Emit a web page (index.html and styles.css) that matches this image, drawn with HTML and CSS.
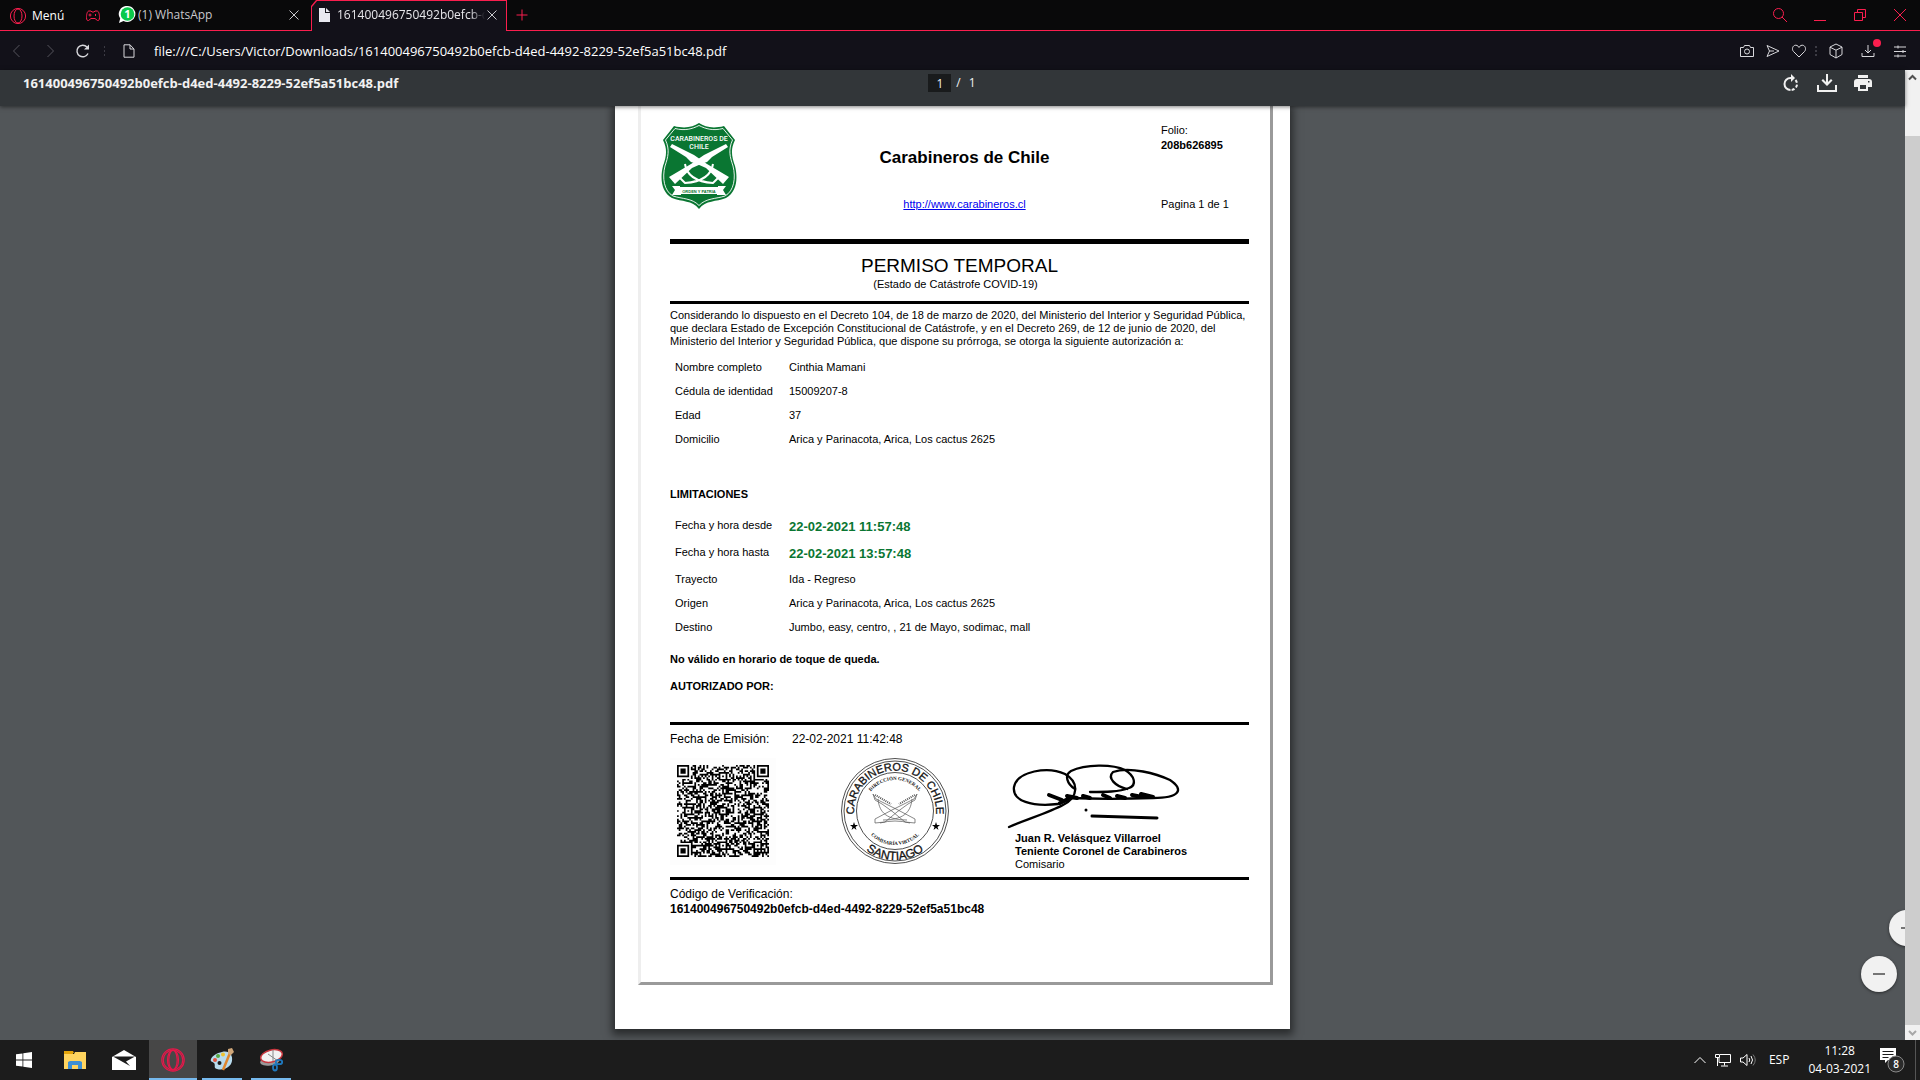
FILE: index.html
```html
<!DOCTYPE html>
<html lang="es">
<head>
<meta charset="utf-8">
<title>161400496750492b0efcb-d4ed-4492-8229-52ef5a51bc48.pdf</title>
<link rel="stylesheet" href="styles.css">
</head>
<body>
<header class="tabbar">
  <button class="menu" type="button">
    <svg width="18" height="18" viewBox="0 0 18 18"><circle cx="9" cy="9" r="7.6"/><ellipse cx="9" cy="9" rx="4" ry="7"/></svg>
    Menú
  </button>
  <button class="gx" type="button" aria-label="GX">
    <svg width="16" height="12" viewBox="0 0 16 12"><path d="M4 1h2l1 1h2l1-1h2c2 0 2.500 4 2.500 6.500S13.500 11 12.500 10.500L10 8.500H6L3.500 10.500C2.500 11 1.500 10 1.500 7.500S2 1 4 1z"/><path d="M5 3.500v3M3.500 5h3M10.500 4v2"/></svg>
  </button>
  <div class="tab">
    <svg width="18" height="18" viewBox="0 0 18 18"><path fill="#fff" d="M9.500 0a8 8 0 1 1-4 15L1 17l1.200-4.500A8 8 0 0 1 9.500 0z"/><circle cx="9.500" cy="8" r="6.800" fill="#0ac94b"/><text x="9.500" y="12" fill="#fff" font-size="11" font-weight="700" text-anchor="middle">1</text></svg>
    <span class="tab-title">(1) WhatsApp</span>
    <button class="close" type="button" aria-label="Cerrar"><svg width="12" height="12" viewBox="0 0 12 12"><path d="M1.500 1.500l9 9M10.500 1.500l-9 9"/></svg></button>
  </div>
  <div class="tab active">
    <svg width="11" height="14" viewBox="0 0 11 14"><path fill="#e8e8ef" d="M0 0h6v5h5v9H0zM7 0l4 4H7z"/></svg>
    <span class="tab-title fade">161400496750492b0efcb-d4ed</span>
    <button class="close" type="button" aria-label="Cerrar"><svg width="12" height="12" viewBox="0 0 12 12"><path d="M1.500 1.500l9 9M10.500 1.500l-9 9"/></svg></button>
  </div>
  <button class="newtab" type="button" aria-label="Nueva pestaña"><svg width="12" height="12" viewBox="0 0 12 12"><path d="M6 .5v11M.5 6h11"/></svg></button>
  <div class="window">
    <button type="button" aria-label="Buscar"><svg width="16" height="16" viewBox="0 0 16 16"><circle cx="6.500" cy="6.500" r="5"/><path d="M10 10l5 5"/></svg></button>
    <button type="button" aria-label="Minimizar"><svg width="14" height="14" viewBox="0 0 14 14"><path d="M1 12.500h12"/></svg></button>
    <button type="button" aria-label="Restaurar"><svg width="14" height="14" viewBox="0 0 14 14"><path d="M1.500 4.500h8v8h-8zM4.500 4.500v-3h8v8h-3"/></svg></button>
    <button type="button" aria-label="Cerrar ventana"><svg width="14" height="14" viewBox="0 0 14 14"><path d="M1 1l12 12M13 1L1 13"/></svg></button>
  </div>
</header>

<nav class="addressbar">
  <button class="nav dim" type="button" aria-label="Atrás"><svg width="10" height="14" viewBox="0 0 10 14"><path d="M7.500 1l-6 6 6 6"/></svg></button>
  <button class="nav dim" type="button" aria-label="Adelante"><svg width="10" height="14" viewBox="0 0 10 14"><path d="M2.500 1l6 6-6 6"/></svg></button>
  <button class="nav" type="button" aria-label="Recargar"><svg width="16" height="16" viewBox="0 0 16 16"><path stroke-width="1.400" d="M13 10.500A5.800 5.800 0 1 1 12 4"/><path fill="#d8d8dc" stroke="none" d="M14 1.500v5H9z"/></svg></button>
  <span class="dots"></span>
  <svg class="file" width="12" height="14" viewBox="0 0 12 14"><path d="M1 .8h6L11 5v8.200H1zM7 .8V5h4"/></svg>
  <input class="url" type="text" aria-label="Dirección" value="file:///C:/Users/Victor/Downloads/161400496750492b0efcb-d4ed-4492-8229-52ef5a51bc48.pdf">
  <button class="tool" type="button" aria-label="Instantánea"><svg width="16" height="14" viewBox="0 0 16 14"><path d="M1.500 3.500h3l1-2h5l1 2h3v9h-13z"/><circle cx="8" cy="7.500" r="2.500"/></svg></button>
  <button class="tool" type="button" aria-label="Enviar"><svg width="16" height="14" viewBox="0 0 16 14"><path d="M2 1.500L14 7 2 12.500 4.500 7zM4.500 7H9"/></svg></button>
  <button class="tool" type="button" aria-label="Favoritos"><svg width="16" height="14" viewBox="0 0 16 14"><path d="M8 13L2.500 7.500C.5 5.500 1.500 1.200 4.800 1.200 6.500 1.200 8 3 8 3.500 8 3 9.500 1.200 11.200 1.200c3.300 0 4.300 4.300 2.300 6.300z"/></svg></button>
  <span class="dots small"></span>
  <button class="tool wide" type="button" aria-label="Extensiones"><svg width="16" height="16" viewBox="0 0 16 16"><path d="M8 1l6 3v7.500L8 15l-6-3.500V4zM2 4.200l6 3 6-3M8 7.200V15"/></svg></button>
  <button class="tool wide badge" type="button" aria-label="Descargas"><svg width="14" height="14" viewBox="0 0 14 14"><path d="M7 1v8M4 6l3 3 3-3M1 9v3.500h12V9"/></svg></button>
  <button class="tool wide" type="button" aria-label="Configuración"><svg width="14" height="14" viewBox="0 0 14 14"><path d="M1 3h12M1 7.500h12M1 12h12M5 1.500v3M10 6v3M5 10.500v3"/></svg></button>
</nav>

<main class="viewer">
  <div class="pdf">
    <div class="pdfbar">
      <span class="pdf-title">161400496750492b0efcb-d4ed-4492-8229-52ef5a51bc48.pdf</span>
      <div class="pager"><input type="text" aria-label="Página" value="1"><span>/</span><span>1</span></div>
      <div class="pdf-tools">
        <button type="button" aria-label="Girar"><svg width="16" height="18" viewBox="0 0 16 18"><path class="ring" d="M7.500 16A6 6 0 0 1 7.500 4H9"/><path class="ring" stroke-dasharray="3 2" d="M12.500 6A6 6 0 0 1 8 16"/><path d="M8 0l4 4-4 4z"/></svg></button>
        <button type="button" aria-label="Descargar"><svg width="20" height="18" viewBox="0 0 20 18"><path d="M9 0h2v8l3-3 1.500 1.500L10 12 4.500 6.500 6 5l3 3zM0 11h2v5h16v-5h2v7H0z"/></svg></button>
        <button type="button" aria-label="Imprimir"><svg width="18" height="16" viewBox="0 0 18 16"><path fill-rule="evenodd" d="M4 0h10v3H4zM3 4h12a3 3 0 0 1 3 3v5h-4v4H4v-4H0V7a3 3 0 0 1 3-3zm3 6v4h6v-4zM14 6v1.500h1.500V6z"/></svg></button>
      </div>
    </div>

    <div class="canvas">
      <article class="sheet">
        <div class="frame">
          <header class="doc-head">
            <svg width="76" height="86" viewBox="0 0 76 86" role="img" aria-label="Escudo de Carabineros">
              <path fill="#0a7632" d="M38 0C44 4 52 6 63 3L74 17C69 27 71 34 74 43 77 55 76 69 65 75 55 79 45 77 38 86 31 77 21 79 11 75 0 69-1 55 2 43 5 34 7 27 2 17L13 3C24 6 32 4 38 0z"/>
              <path fill="none" stroke="#fff" stroke-width=".9" d="M38 2.500C45 6 52 8 62 5.500L71.500 17C67 27 69 34 72 43 75 55 73 68 64 73 55 76 45 75 38 82.500 31 75 21 76 12 73 3 68 1 55 4 43 7 34 9 27 4.500 17L14 5.500C24 8 31 6 38 2.500z"/>
              <g fill="#fff" font-family="Roboto" font-size="7" font-weight="500" text-anchor="middle"><text x="38" y="18">CARABINEROS DE</text><text x="38" y="26">CHILE</text></g>
              <g fill="#fff"><path d="M9 24l2-3 22 11 13 9 22 13-6 7-17-16-9-4-6-2-5-5z"/><path d="M67 24l-2-3-22 11-13 9L8 54l6 7 17-16 9-4 6-2 5-5z"/></g>
              <path fill="none" stroke="#fff" stroke-width="2" d="M24 41c2 14 14 18 28 19l5-5M52 41c-2 14-14 18-28 19l-5-5"/>
              <path fill="#fff" d="M11 63h8v1h38v-1h8l-3 4 3 5h-9v-1H20v1h-9l3-5z"/>
              <text x="38" y="70" fill="#0a7632" font-size="4" font-weight="700" text-anchor="middle">ORDEN Y PATRIA</text>
            </svg>
            <div class="doc-brand"><h1>Carabineros de Chile</h1><a href="http://www.carabineros.cl">http://www.carabineros.cl</a></div>
            <div class="doc-folio"><span>Folio:</span><strong>208b626895</strong><span class="pages">Pagina 1 de 1</span></div>
          </header>
          <div class="doc-body">
            <hr class="thick">
            <div class="doc-title"><h2>PERMISO TEMPORAL</h2><p>(Estado de Catástrofe COVID-19)</p></div>
            <hr>
            <p class="intro">Considerando lo dispuesto en el Decreto 104, de 18 de marzo de 2020, del Ministerio del Interior y Seguridad Pública,<br>que declara Estado de Excepción Constitucional de Catástrofe, y en el Decreto 269, de 12 de junio de 2020, del<br>Ministerio del Interior y Seguridad Pública, que dispone su prórroga, se otorga la siguiente autorización a:</p>
            <table class="data">
              <tr><th scope="row">Nombre completo</th><td>Cinthia Mamani</td></tr>
              <tr><th scope="row">Cédula de identidad</th><td>15009207-8</td></tr>
              <tr><th scope="row">Edad</th><td>37</td></tr>
              <tr><th scope="row">Domicilio</th><td>Arica y Parinacota, Arica, Los cactus 2625</td></tr>
            </table>
            <h3>LIMITACIONES</h3>
            <table class="data">
              <tr class="when"><th scope="row">Fecha y hora desde</th><td>22-02-2021 11:57:48</td></tr>
              <tr class="when"><th scope="row">Fecha y hora hasta</th><td>22-02-2021 13:57:48</td></tr>
              <tr><th scope="row">Trayecto</th><td>Ida - Regreso</td></tr>
              <tr><th scope="row">Origen</th><td>Arica y Parinacota, Arica, Los cactus 2625</td></tr>
              <tr><th scope="row">Destino</th><td>Jumbo, easy, centro, , 21 de Mayo, sodimac, mall</td></tr>
            </table>
            <p class="note">No válido en horario de toque de queda.</p>
            <p class="note">AUTORIZADO POR:</p>
            <hr class="sign-rule">
            <div class="issued"><span>Fecha de Emisión:</span><span>22-02-2021 11:42:48</span></div>
            <div class="seals">
              <svg width="106" height="107" viewBox="0 0 106 107" role="img" aria-label="Código QR"><rect width="106" height="107" fill="#fdfdfd"/><path id="qr" transform="translate(7 7) scale(1.736)"/></svg>
              <svg width="108" height="106" viewBox="-54 -53 108 106" role="img" aria-label="Timbre">
                <defs><path id="arcTop" d="M-38 16A41 41 0 1 1 38 16"/><path id="arcBottom" d="M-49 0A49 49 0 0 0 49 0"/><path id="arcIn" d="M-31 0A31 31 0 0 1 31 0"/><path id="arcInB" d="M-34 0A34 34 0 0 0 34 0"/></defs>
                <g fill="none" stroke="#222" stroke-width=".8"><ellipse rx="53.500" ry="52.500"/><ellipse rx="51" ry="50"/><circle r="38.500"/></g>
                <g text-anchor="middle" font-family="Liberation Sans" fill="#111"><text font-size="11" stroke="#111" stroke-width=".3"><textPath href="#arcTop" startOffset="50%">CARABINEROS DE CHILE</textPath></text><text font-size="12" stroke="#111" stroke-width=".3"><textPath href="#arcBottom" startOffset="50%">SANTIAGO</textPath></text></g>
                <g text-anchor="middle" font-family="Liberation Serif" font-weight="700" font-size="5" fill="#111"><text><textPath href="#arcIn" startOffset="50%">DIRECCIÓN GENERAL</textPath></text><text><textPath href="#arcInB" startOffset="50%">COMISARÍA VIRTUAL</textPath></text></g>
                <path d="M-41 11l1 3h3l-2.500 2 1 3-2.500-2-2.500 2 1-3-2.500-2h3zM41 11l1 3h3l-2.500 2 1 3-2.500-2-2.500 2 1-3-2.500-2h3z"/>
                <g fill="none" stroke="#555" stroke-width=".7"><path d="M-22-17l3 5L3-1 20 8v4L10 11-2 1-13-7l-7-4zM22-17l-3 5L-3-1-20 8v4L-10 11 2 1 13-7l7-4z"/><path d="M-17-12C-16-2-12 9 12 9M17-12C16-2 12 9-12 9M-15 12Q0 8 15 12"/><path stroke-dasharray="1 1" stroke-width="2" d="M-20-16L-4-7M20-16L4-7"/></g>
              </svg>
              <div class="signature">
                <svg width="180" height="74" viewBox="0 0 180 74" role="img" aria-label="Firma">
                  <g fill="none" stroke="#000" stroke-linecap="round" stroke-linejoin="round" stroke-width="2.300">
                    <path d="M4 69C20 62 45 54 58 47 74 39 74 24 60 16 43 8 12 13 9 29 7 43 27 49 53 46L62 42"/>
                    <path d="M70 31C62 26 59 17 66 13 80 6 108 6 120 12 130 18 132 27 124 30 114 34 100 34 85 34"/>
                    <path d="M122 31C110 28 102 20 108 14 125 8 152 16 165 22 180 32 174 40 148 40 120 41 90 41 64 40"/>
                    <path stroke-width="4" d="M44 37L57 42M62 38l10 2M78 38l7 2M98 37l7 3M112 38l8 2M127 37l10 2M136 36l12 3M55 45l8-4"/>
                    <path stroke-width="3" d="M87 58l65 2M81 52h0"/>
                  </g>
                </svg>
                <p><strong>Juan R. Velásquez Villarroel</strong><br><strong>Teniente Coronel de Carabineros</strong><br>Comisario</p>
              </div>
            </div>
            <hr>
            <p class="code">Código de Verificación:<br><strong>161400496750492b0efcb-d4ed-4492-8229-52ef5a51bc48</strong></p>
          </div>
        </div>
      </article>
      <button class="zoom plus" type="button" aria-label="Acercar"></button>
      <button class="zoom minus" type="button" aria-label="Alejar"></button>
    </div>
  </div>
  <div class="scrollbar">
    <svg width="15" height="15" viewBox="0 0 15 15"><path d="M4 9.500L7.500 6 11 9.500" stroke="#505050"/></svg>
    <div class="thumb"></div>
    <svg width="15" height="15" viewBox="0 0 15 15"><path d="M4 6l3.500 3.500L11 6" stroke="#a8a8a8"/></svg>
  </div>
</main>

<footer class="taskbar">
  <button class="start" type="button" aria-label="Inicio"><svg width="16" height="16" viewBox="0 0 16 16"><path fill="#fff" d="M0 2.300L6.500 1.400v6.200H0zM7.300 1.300L16 0v7.600H7.300zM0 8.400h6.500v6.200L0 13.700zM7.300 8.400H16V16l-8.700-1.300z"/></svg></button>
  <button class="app" type="button" aria-label="Explorador"><svg width="22" height="18" viewBox="0 0 22 18"><path fill="#e5a50a" d="M0 0h9l1 2h-1v3H0z"/><path fill="#ffd45e" d="M0 3h10l1-2h11v17H0z"/><path fill="#3d8fd4" d="M4 18v-7l2-1h10l2 1v7h-4v-4H8v4z"/></svg></button>
  <button class="app" type="button" aria-label="Correo"><svg width="24" height="20" viewBox="0 0 24 20"><path fill="#fff" d="M0 7l12-7 12 7v13H0z"/><path fill="#1c1c1c" d="M1 6.500h22l-9 5 4 4.500z"/></svg></button>
  <button class="app current" type="button" aria-label="Opera GX"><svg width="24" height="24" viewBox="0 0 24 24"><g fill="none" stroke="#e8174a" stroke-width="1.200"><circle cx="12" cy="12" r="11.200"/><circle cx="12" cy="12" r="9.800"/><ellipse cx="12" cy="12" rx="5.500" ry="10"/><ellipse cx="12" cy="12" rx="4.200" ry="9.500"/></g></svg></button>
  <button class="app open" type="button" aria-label="Paint"><svg width="24" height="24" viewBox="0 0 24 24"><path fill="#b9dcee" d="M12 4C19 2 23 7 22 13S14 23 7 21c-4-1-1-4-3-6s-4-1-3-4S7 5 12 4z"/><circle cx="5" cy="12" r="2" fill="#e2553f"/><circle cx="8" cy="8" r="2" fill="#58a942"/><circle cx="13" cy="6.500" r="2" fill="#f0c330"/><circle cx="9.500" cy="15" r="2" fill="#1c1c1c"/><path stroke="#e0862c" stroke-width="2.500" d="M20 5l-7 17"/><path fill="#cfa679" d="M18 1l4-1 2 4-3 3-3-1z"/></svg></button>
  <button class="app open" type="button" aria-label="Recortes"><svg width="24" height="24" viewBox="0 0 24 24"><ellipse cx="11" cy="13" rx="10" ry="4.500" fill="#999" transform="rotate(-10 11 13)"/><ellipse cx="12.500" cy="8" rx="11" ry="6" fill="#f2f2f2" stroke="#c8383f" stroke-width="1.500" transform="rotate(-14 12.500 8)"/><path stroke="#888" d="M14 2v11M9 6l10 7"/><g fill="none" stroke="#1f78bd" stroke-width="1.800"><ellipse cx="20" cy="14" rx="3.200" ry="2.200"/><ellipse cx="16" cy="19.500" rx="2" ry="3"/></g></svg></button>
  <div class="tray">
    <svg width="12" height="8" viewBox="0 0 12 8"><path d="M.5 7L6 1.500 11.500 7"/></svg>
    <svg width="16" height="14" viewBox="0 0 16 14"><path d="M5 1.500h10.500v8H4V5M9.500 9.500v3M6 13h7M.5 1.500h4v3h-4zM2.500 4.500V13"/></svg>
    <svg width="16" height="14" viewBox="0 0 16 14"><path d="M.5 5v4h2.500l4 3.500v-11L3 5zM9 5q1.500 2 0 4M11 3q3 4 0 8"/><path stroke="#777" d="M13 1.500q4.500 5.500 0 11"/></svg>
    <span class="lang">ESP</span>
    <time class="clock">11:28<br>04-03-2021</time>
    <button class="notify" type="button" aria-label="Notificaciones"><svg width="25" height="26" viewBox="0 0 25 26"><path fill="#fff" d="M0 1h16v12H8l-3 3v-3H0z"/><path stroke="#1c1c1c" d="M2.500 4.500h11M2.500 7.500h11M2.500 10.500h6"/><circle cx="16" cy="17" r="8" fill="#2b2b2b" stroke="#8a8a8a"/><text x="16" y="21" fill="#fff" font-size="10" font-weight="600" text-anchor="middle">8</text></svg></button>
  </div>
</footer>
<script src="qr.js"></script>
</body>
</html>
```
FILE: styles.css
```css
* { box-sizing: border-box; }
body {
  margin: 0;
  height: 100vh;
  display: flex;
  flex-direction: column;
  overflow: hidden;
  background: #525659;
  color: #fff;
  font: 12px/16px "Open Sans", "Noto Sans", sans-serif;
}
button {
  display: flex;
  align-items: center;
  justify-content: center;
  padding: 0;
  border: 0;
  background: none;
  color: inherit;
  font: inherit;
}
input { border: 0; padding: 0; color: inherit; font: inherit; }
h1, h2, h3, p { margin: 0; }
svg { flex: none; display: block; }

/* Tab strip */
.tabbar {
  display: flex;
  flex: none;
  height: 31px;
  background: linear-gradient(#fa1e4e, #fa1e4e) bottom / 100% 1px no-repeat #09090a;
}
.tabbar svg { fill: none; stroke: #fa1e4e; }
.menu { gap: 5px; padding-left: 9px; width: 64px; justify-content: flex-start; }
.gx { width: 58px; }
.tab { display: flex; align-items: center; width: 189px; padding: 0 10px 1px 0; color: #c8c8cc; }
.tab > svg { stroke: none; margin-left: -4px; margin-right: 2px; }
.tab-title { flex: 1; overflow: hidden; white-space: nowrap; }
.close { width: 14px; height: 20px; }
.tabbar .close svg { stroke: #c8c8cc; }
.active {
  position: relative;
  width: 196px;
  padding: 0 8px 1px 12px;
  color: #e6e6ea;
  background: #fa1e4e;
  clip-path: polygon(5px 0, 100% 0, 100% 100%, 0 100%, 0 6px);
}
.active::before {
  content: "";
  position: absolute;
  inset: 1px 1px 0;
  background: #121119;
  clip-path: polygon(5px 0, 100% 0, 100% 100%, 0 100%, 0 6px);
}
.active > * { position: relative; }
.active > svg { margin: 0 7px 0 -4px; }
.fade { -webkit-mask-image: linear-gradient(90deg, #000 90%, transparent); mask-image: linear-gradient(90deg, #000 90%, transparent); }
.newtab { width: 30px; padding-bottom: 2px; }
.window { display: flex; margin-left: auto; }
.window button { width: 40px; padding-bottom: 2px; }

/* Address bar */
.addressbar { display: flex; align-items: center; flex: none; height: 39px; padding-right: 4px; background: #121119; }
.addressbar svg { fill: none; stroke: #d8d8dc; }
.nav { width: 33px; height: 30px; }
.addressbar .dim svg { stroke: #55545c; }
.dots { width: 11px; height: 11px; background: radial-gradient(circle at 50% 50%, #3c3b44 1px, transparent 1px) 0 0 / 11px 4px; }
.dots.small { width: 8px; background-size: 8px 4px; }
.file { margin: 0 19px 0 13px; }
.url { flex: 1; background: none; color: #fff; font-size: 13px; }
.tool { width: 26px; height: 30px; }
.wide { width: 32px; }
.badge { position: relative; }
.badge::after { content: ""; position: absolute; top: 3px; right: 3px; width: 8px; height: 8px; border-radius: 50%; background: #fa1e4e; }

/* PDF viewer */
.viewer { flex: 1; display: flex; min-height: 0; }
.pdf { flex: 1; display: flex; flex-direction: column; min-width: 0; }
.pdfbar {
  display: grid;
  grid-template-columns: 1fr auto 1fr;
  align-items: center;
  flex: none;
  height: 36px;
  padding: 0 24px 10px 23px;
  background: #323639;
  color: #f1f1f1;
  position: relative;
  box-shadow: 0 1px 4px rgba(0, 0, 0, .5);
  z-index: 1;
}
.pdf-title { font-size: 13px; font-weight: 700; }
.pager { display: flex; align-items: center; gap: 8px; }
.pager input { width: 23px; height: 18px; text-align: center; background: #191b1c; }
.pager input + span { margin-left: -3px; }
.pdf-tools { display: flex; justify-content: flex-end; }
.pdf-tools button { width: 36px; height: 26px; }
.pdf-tools svg { fill: #f1f1f1; }
.pdf-tools .ring { fill: none; stroke: #f1f1f1; stroke-width: 2; }
.canvas { flex: 1; position: relative; overflow: hidden; min-height: 0; }
.zoom { position: absolute; width: 36px; height: 36px; border-radius: 50%; background: #f1f1f1; box-shadow: 0 1px 3px rgba(0, 0, 0, .5); }
.zoom::before { content: ""; width: 12px; height: 2px; background: #757575; }
.minus { right: 8px; bottom: 48px; }
.plus { right: -20px; bottom: 94px; }
.scrollbar { display: flex; flex-direction: column; width: 15px; background: #f1f1f1; }
.scrollbar svg { fill: none; stroke-width: 2; }
.thumb { flex: 1; margin-top: 51px; background: #cdcdcd; }

/* Document */
.sheet {
  max-width: 675px;
  margin: 0 auto;
  padding: 0 17px 44px 23px;
  background: #fff;
  color: #000;
  font: 11px/13px "Liberation Sans", Arial, sans-serif;
  box-shadow: 0 3px 8px 3px rgba(0, 0, 0, .5);
}
.frame { padding: 0 21px 65px 20px; border: solid #9a9a9a; border-width: 0 3px 3px; border-left-color: #eee; }
.doc-head { display: grid; grid-template-columns: 107px 1fr 88px; padding: 17px 0 27px; }
.doc-brand { text-align: center; padding-top: 25px; }
.doc-brand h1 { font-size: 17px; line-height: 20px; margin-bottom: 30px; }
.doc-brand a { display: block; color: #00e; }
.doc-folio { display: flex; flex-direction: column; line-height: 15px; }
.pages { margin-top: 44px; }
.doc-body { padding-left: 9px; }
hr { height: 3px; margin: 0; border: 0; background: #000; }
.thick { height: 5px; }
.doc-title { padding: 11px 0 10px; text-align: center; }
.doc-title h2 { font-size: 19px; line-height: 22px; font-weight: 400; margin-bottom: 1px; }
.doc-title p { padding-right: 8px; }
.intro { padding: 5px 0 7px; white-space: nowrap; }
.data { border-collapse: collapse; }
.data th, .data td { height: 24px; padding: 0; text-align: left; font-weight: 400; }
.data th { width: 119px; padding-left: 5px; }
.data .when th, .data .when td { height: 27px; padding-bottom: 2px; }
.data .when td { padding: 0; color: #0a7632; font-size: 13px; font-weight: 700; }
h3 { font-size: 11px; margin: 37px 0 12px; }
.note { margin-top: 14px; font-weight: 700; }
.sign-rule { margin: 29px 0 7px; }
.issued { display: flex; font-size: 12px; line-height: 14px; }
.issued span:first-child { width: 122px; }
.seals { display: grid; grid-template-columns: 171px 164px 1fr; padding: 12px 0 6px; }
.signature p { padding-left: 10px; }
.code { padding-top: 7px; font-size: 12px; line-height: 15px; }

/* Taskbar */
.taskbar { display: flex; flex: none; gap: 1px; height: 40px; background: #1c1c1c; }
.start { width: 48px; margin-right: 2px; }
.app { width: 48px; position: relative; }
.current { background: #474747; }
.open::after, .current::after { content: ""; position: absolute; bottom: 0; left: 4px; right: 4px; height: 2px; background: #76b9ed; }
.current::after { left: 0; right: 0; }
.tray { display: flex; align-items: center; margin-left: auto; padding-right: 4px; gap: 9px; }
.tray > svg { fill: none; stroke: #fff; }
.lang { margin: 0 10px 0 4px; }
.clock { text-align: center; line-height: 18px; }
.notify { width: 36px; height: 40px; padding-right: 11px; border-right: 1px solid #555; }
```
FILE: qr.js
```js
// Builds the 53x53 module grid: finder and alignment marks over a data field.
const SIZE = 53;
const marks = [];
const ring = (x, y, cx, cy) => Math.max(Math.abs(x - cx), Math.abs(y - cy));
let seed = 20210222;
const next = () => (seed = (seed * 1103515245 + 12345) % 2147483648) / 2147483648;

function dark(x, y) {
  const noise = next() > 0.48;
  for (const [cx, cy] of [[3, 3], [SIZE - 4, 3], [3, SIZE - 4]]) {
    const r = ring(x, y, cx, cy);
    if (r <= 4) return r !== 2 && r !== 4;
  }
  for (const cx of [6, 26, 46]) {
    for (const cy of [6, 26, 46]) {
      const r = ring(x, y, cx, cy);
      if (r <= 2 && cx + cy > 31) return r !== 1;
    }
  }
  if (x === 6 || y === 6) return (x + y) % 2 === 0;
  return noise;
}

for (let y = 0; y < SIZE; y++) {
  for (let x = 0; x < SIZE; x++) {
    if (dark(x, y)) marks.push(`M${x} ${y}h1v1h-1z`);
  }
}
document.getElementById("qr").setAttribute("d", marks.join(""));
```
